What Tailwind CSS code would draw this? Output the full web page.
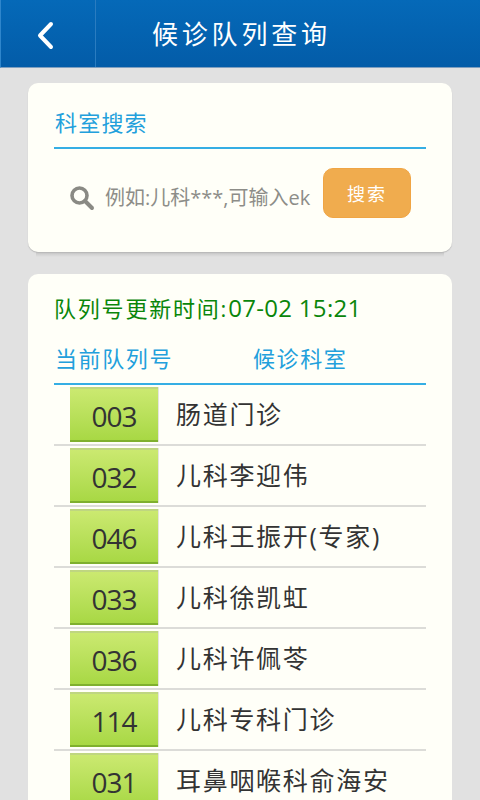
<!DOCTYPE html>
<html lang="zh-CN">
<head>
    <meta charset="UTF-8">
    <meta name="viewport" content="width=device-width, initial-scale=1.0">
    <title>候诊队列查询</title>
    <script src="https://cdn.jsdelivr.net/npm/@tailwindcss/browser@4"></script>
</head>
<body class="bg-[#e1e1e1] w-[480px] h-[800px] overflow-hidden font-['Open_Sans','Noto_Sans_CJK_SC',sans-serif]">
    <!-- header -->
    <header class="h-[68px] flex bg-gradient-to-b from-[#0569b8] to-[#035ca8] border-b border-[#7f9fbf] border-l border-l-[#2f86cc]">
        <div class="w-[95px] flex items-center border-r border-[#2a7cc0]">
            <svg class="ml-[35px] mt-[3px]" width="20" height="32" viewBox="0 0 20 32" fill="none">
                <path d="M15 5 L4 16.5 L15 28" stroke="#fff" stroke-width="4" stroke-linecap="round" stroke-linejoin="round"/>
            </svg>
        </div>
        <h1 class="ml-[56px] mt-[15px] text-[26px] leading-[38px] tracking-[3.8px] text-white">候诊队列查询</h1>
    </header>

    <!-- search card -->
    <section class="relative mx-[28px] mt-[15px] h-[169px] bg-[#fffff8] rounded-[10px] px-[26px] shadow-[0_1px_1px_#b9b9b9]">
        <h2 class="pt-[22px] pl-[1px] h-[66px] border-b-2 border-[#35aee4] text-[22px] leading-[34px] tracking-[1.2px] text-[#22a0dc]">科室搜索</h2>
        <div class="flex items-center mt-[19px] ml-[15px]">
            <svg class="mt-[10px]" width="26" height="28" viewBox="0 0 26 28" fill="none">
                <circle cx="10.5" cy="11.5" r="7.5" stroke="#8a8a84" stroke-width="3.6"/>
                <path d="M16 17 L23 24" stroke="#8a8a84" stroke-width="4" stroke-linecap="round"/>
            </svg>
            <span class="ml-[10px] mt-[10px] w-[218px] text-[20px] leading-[30px] whitespace-nowrap overflow-hidden text-[#8d8d88]">例如:儿科***,可输入ek</span>
            <button class="w-[88px] h-[50px] pt-[2px] bg-[#f0ac4e] border border-[#f0a544] rounded-[10px] text-[18px] tracking-[2px] text-white">搜索</button>
        </div>
    </section>
    <div class="mx-[36px] h-[5px] bg-gradient-to-b from-[#c4c4c4] to-[#e1e1e1]"></div>

    <!-- queue card -->
    <section class="mx-[28px] mt-[17px] bg-[#fffff8] rounded-t-[10px] px-[26px] h-[600px]">
        <p class="pt-[16px] text-[24px] leading-[36px] tracking-[0.3px] text-[#0a860a] whitespace-nowrap"><span class="text-[22px] tracking-[1.8px]">队列号更新时间:</span>07-02 15:21</p>
        <div class="flex h-[59px] pt-[15px] border-b-2 border-[#35aee4] text-[22px] leading-[34px] tracking-[1.6px] text-[#22a0dc]">
            <span class="w-[199px] pl-[1px]">当前队列号</span>
            <span>候诊科室</span>
        </div>

        <ul id="rows"></ul>
    </section>

    <script>
        const rows = [
            ["003", "肠道门诊"],
            ["032", "儿科李迎伟"],
            ["046", "儿科王振开(专家)"],
            ["033", "儿科徐凯虹"],
            ["036", "儿科许佩苓"],
            ["114", "儿科专科门诊"],
            ["031", "耳鼻咽喉科俞海安"]
        ];

        document.getElementById("rows").innerHTML = rows.map(([num, name]) => `
            <li class="h-[61px] pt-[2px] flex border-b-2 border-[#dcdcd8]">
                <div class="ml-[16px] w-[88px] h-[55px] pt-[3px] flex items-center justify-center bg-gradient-to-b from-[#cbe970] to-[#a8d844] border-t-2 border-t-[#bfd680] border-b-2 border-b-[#7fb02e] shadow-[1px_0_0_#e4e4de] text-[28px] tracking-[-1px] text-[#333]">${num}</div>
                <div class="ml-[18px] mt-[8px] text-[25px] leading-[38px] tracking-[1.7px] text-[#333] whitespace-nowrap">${name}</div>
            </li>`).join("");
    </script>
</body>
</html>
